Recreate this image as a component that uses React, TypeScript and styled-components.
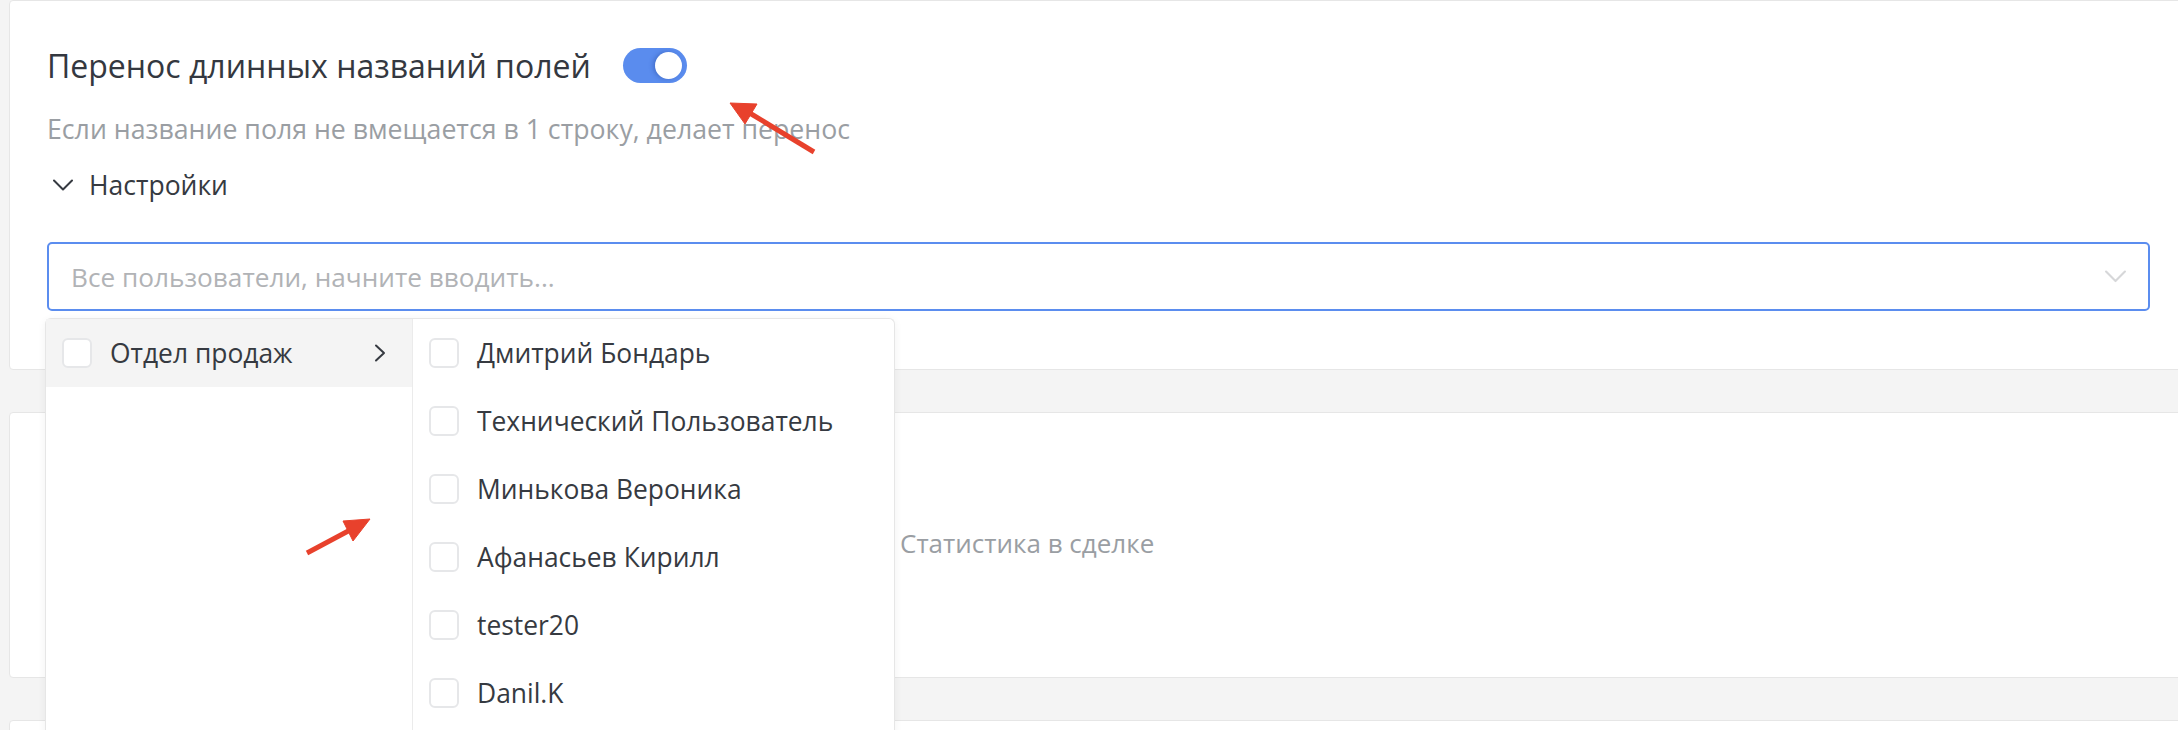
import React, { useState } from 'react';
import styled, { createGlobalStyle } from 'styled-components';

const GlobalStyle = createGlobalStyle`
  html, body {
    margin: 0;
    padding: 0;
    background: #f4f4f4;
    overflow: hidden;
  }
  body {
    font-family: 'Open Sans', 'Noto Sans', sans-serif;
    color: #363a41;
  }
`;

const Page = styled.div`
  position: relative;
  display: flex;
  flex-direction: column;
  gap: 42px;
  padding-left: 9px;
  height: 730px;
  overflow: hidden;
`;

const Card = styled.section<{ height?: number }>`
  position: relative;
  background: #fff;
  border: 1px solid #e6e6e6;
  border-radius: 4px;
  margin-right: -9px;
  box-sizing: border-box;
  flex-shrink: 0;
  height: ${p => (p.height ? `${p.height}px` : 'auto')};
`;

const SettingsBody = styled.div`
  display: flex;
  flex-direction: column;
  padding: 47px 36px 0 37px;
`;

const TitleRow = styled.div`
  display: flex;
  align-items: center;
  gap: 32px;
  height: 35px;
`;

const Title = styled.h2`
  margin: 0;
  font-size: 32px;
  font-weight: 400;
  color: #343840;
  line-height: 35px;
`;

const Toggle = styled.button<{ on: boolean }>`
  position: relative;
  width: 64px;
  height: 35px;
  border: 0;
  padding: 0;
  border-radius: 18px;
  background: ${p => (p.on ? '#5a8cee' : '#d5d8dc')};
  cursor: pointer;

  &::after {
    content: '';
    position: absolute;
    top: 4px;
    left: ${p => (p.on ? '32px' : '4px')};
    width: 27px;
    height: 27px;
    border-radius: 50%;
    background: #fff;
    box-shadow: -2px 0 4px rgba(30, 60, 140, 0.35);
  }
`;

const Hint = styled.p`
  margin: 30px 0 0;
  font-size: 26.7px;
  line-height: 32px;
  color: #9a9ea3;
`;

const Collapse = styled.div`
  display: flex;
  align-items: center;
  gap: 16px;
  margin-top: 22px;
  padding-left: 6px;
  font-size: 26.5px;
  line-height: 36px;
  color: #363a41;
`;

const SelectWrap = styled.div`
  position: relative;
  margin-top: 39px;
`;

const SelectBox = styled.div`
  display: flex;
  align-items: center;
  justify-content: space-between;
  height: 69px;
  box-sizing: border-box;
  border: 2px solid #5b8def;
  border-radius: 5px;
  padding: 0 22px 0 22px;
`;

const Placeholder = styled.span`
  font-size: 26.2px;
  color: #b1b3b6;
`;

const Popup = styled.div`
  position: absolute;
  top: 76px;
  left: -2px;
  display: flex;
  width: 848px;
  height: 420px;
  background: #fff;
  border: 1px solid #e6e6e6;
  border-bottom: 0;
  border-radius: 6px 6px 0 0;
  box-shadow: 0 2px 8px rgba(0, 0, 0, 0.06);
  z-index: 5;
`;

const Column = styled.div<{ width: number; divider?: boolean }>`
  width: ${p => p.width}px;
  flex-shrink: 0;
  display: flex;
  flex-direction: column;
  border-right: ${p => (p.divider ? '1px solid #ebebeb' : '0')};
`;

const Option = styled.div<{ active?: boolean }>`
  display: flex;
  align-items: center;
  flex-shrink: 0;
  gap: 18px;
  height: 68px;
  padding: 0 26px 0 16px;
  background: ${p => (p.active ? '#f4f4f4' : 'transparent')};
  font-size: 26.4px;
  color: #363a41;
  cursor: pointer;
`;

const OptionLabel = styled.span`
  flex: 1;
  white-space: nowrap;
`;

const Check = styled.span`
  width: 30px;
  height: 30px;
  flex-shrink: 0;
  box-sizing: border-box;
  border: 2px solid #e6e7e9;
  border-radius: 6px;
  background: #fff;
`;

const StatsBody = styled.div`
  display: flex;
  align-items: center;
  justify-content: flex-start;
  height: 100%;
`;

const StatsLabel = styled.span`
  margin-left: 890px;
  font-size: 26px;
  color: #9a9ea3;
  padding-bottom: 5px;
`;

const Annotations = styled.svg`
  position: absolute;
  top: 0;
  left: 0;
  width: 2178px;
  height: 730px;
  pointer-events: none;
  z-index: 10;
`;

const ChevronDown = ({ color, size }: { color: string; size: number }) => (
  <svg width={size} height={size * 0.6} viewBox="0 0 20 12" fill="none">
    <path d="M1 1.5 L10 10.5 L19 1.5" stroke={color} strokeWidth="2" strokeLinecap="round" strokeLinejoin="round" />
  </svg>
);

const ChevronRight = () => (
  <svg width="12" height="18" viewBox="0 0 12 18" fill="none">
    <path d="M2 1.5 L10 9 L2 16.5" stroke="#363a41" strokeWidth="2" strokeLinecap="round" strokeLinejoin="round" />
  </svg>
);

const users = [
  'Дмитрий Бондарь',
  'Технический Пользователь',
  'Минькова Вероника',
  'Афанасьев Кирилл',
  'tester20',
  'Danil.K',
];

function App(): JSX.Element {
  const [wrap, setWrap] = useState(true);

  return (
    <>
      <GlobalStyle />
      <Page>
        <Card height={370}>
          <SettingsBody>
            <TitleRow>
              <Title>Перенос длинных названий полей</Title>
              <Toggle on={wrap} onClick={() => setWrap(v => !v)} aria-label="toggle" />
            </TitleRow>
            <Hint>Если название поля не вмещается в 1 строку, делает перенос</Hint>
            <Collapse>
              <ChevronDown color="#363a41" size={20} />
              Настройки
            </Collapse>
            <SelectWrap>
              <SelectBox>
                <Placeholder>Все пользователи, начните вводить...</Placeholder>
                <ChevronDown color="#d6d7d9" size={21} />
              </SelectBox>
              <Popup>
                <Column width={366} divider>
                  <Option active>
                    <Check />
                    <OptionLabel>Отдел продаж</OptionLabel>
                    <ChevronRight />
                  </Option>
                </Column>
                <Column width={481}>
                  {users.map(u => (
                    <Option key={u}>
                      <Check />
                      <OptionLabel>{u}</OptionLabel>
                    </Option>
                  ))}
                </Column>
              </Popup>
            </SelectWrap>
          </SettingsBody>
        </Card>
        <Card height={266}>
          <StatsBody>
            <StatsLabel>Статистика в сделке</StatsLabel>
          </StatsBody>
        </Card>
        <Card height={40} />
        <Annotations viewBox="0 0 2178 730">
          <g fill="#e8412c" stroke="#e8412c">
            <line x1="814" y1="152" x2="748" y2="112" strokeWidth="5" />
            <polygon points="730,103 757,104 745,124" strokeWidth="1" />
            <line x1="307" y1="553" x2="352" y2="529" strokeWidth="5" />
            <polygon points="370,519 343,521 353,541" strokeWidth="1" />
          </g>
        </Annotations>
      </Page>
    </>
  );
}

export default App;
